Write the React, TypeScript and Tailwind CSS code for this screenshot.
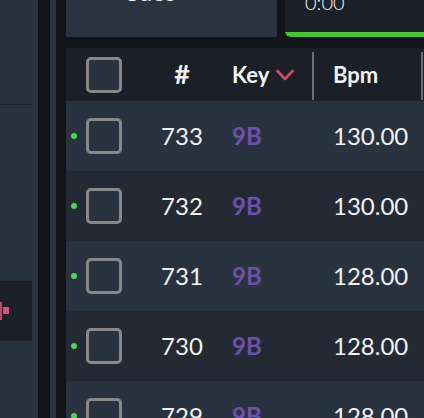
import React from 'react';

// --- DATA: visible tracks ---
const TRACKS = [
  { id: 733, key: '9B', bpm: '130.00' },
  { id: 732, key: '9B', bpm: '130.00' },
  { id: 731, key: '9B', bpm: '128.00' },
  { id: 730, key: '9B', bpm: '128.00' },
  { id: 729, key: '9B', bpm: '128.00' },
];

const Checkbox: React.FC = () => (
  <div className="w-[36px] h-[36px] shrink-0 rounded-[5px] border-[3px] border-[#888888] bg-[#29323f]" />
);

const App: React.FC = () => {
  return (
    <div className="flex h-[418px] w-[424px] overflow-hidden bg-[#111418] font-['Lato','Noto_Sans',sans-serif] text-[#f2f2f2]">
      {/* Left side panel */}
      <aside className="w-[38px] shrink-0 flex flex-col bg-[#283240]">
        <div className="h-[104px] shrink-0" />
        <div className="h-px w-[32px] shrink-0 bg-[#1a1f27]" />
        <div className="h-[176px] shrink-0" />
        <div className="h-[60px] w-[32px] shrink-0 flex items-center bg-[#1b2029]">
          <svg width="10" height="20" viewBox="0 0 10 20">
            <rect x="0" y="1" width="2" height="18" fill="#c4466f" />
            <rect x="3" y="6" width="6" height="7" fill="#dc527d" />
          </svg>
        </div>
      </aside>

      {/* Scroll track */}
      <div className="ml-[12px] w-[6px] shrink-0 bg-[#283240]" />

      <main className="ml-[10px] flex-1 min-w-0 flex flex-col">
        {/* Top cards (scrolled partly off) */}
        <div className="h-[37px] shrink-0 flex gap-[8px]">
          <div className="w-[211px] shrink-0 overflow-hidden bg-[#2a3340]">
            <div className="-mt-[23px] pl-[57px] text-[24px] leading-[29px]">Cues</div>
          </div>
          <div className="flex-1 flex flex-col justify-between overflow-hidden rounded-bl-[6px] bg-[#1b2029]">
            <div className="-mt-[10px] pl-[20px] text-[20px] leading-[24px] font-light">0:00</div>
            <div className="h-[5px] rounded-bl-[6px] bg-[#4cc23b]" />
          </div>
        </div>

        {/* Table header */}
        <div className="mt-[11px] h-[53px] shrink-0 flex items-center bg-[#1b2028]">
          <div className="w-[20px] shrink-0" />
          <Checkbox />
          <div className="ml-[20px] w-[80px] shrink-0 text-center text-[27px] font-bold">#</div>
          <div className="ml-[10px] w-[80px] shrink-0 flex items-center gap-[7px] text-[22px] font-bold">
            Key
            <svg width="18" height="12" viewBox="0 0 18 12" fill="none">
              <path d="M1.5 2 L9 10 L16.5 2" stroke="#d4476f" strokeWidth="2.6" strokeLinecap="round" strokeLinejoin="round" />
            </svg>
          </div>
          <div className="w-[2px] self-stretch mt-[4px] mb-[1px] shrink-0 bg-[#6f6f6f]" />
          <div className="w-[107px] shrink-0 pl-[19px] text-[22px] font-bold">Bpm</div>
          <div className="w-[2px] self-stretch mt-[4px] mb-[1px] shrink-0 bg-[#6f6f6f]" />
        </div>

        {/* Rows */}
        {TRACKS.map((t, i) => (
          <div
            key={t.id}
            className={`h-[70px] shrink-0 flex items-center ${i % 2 === 0 ? 'bg-[#29323f]' : 'bg-[#232a33]'}`}
          >
            <div className="w-[20px] shrink-0 pl-[5px]">
              <div className="w-[6px] h-[6px] rounded-full bg-[#4fd35f]" />
            </div>
            <Checkbox />
            <div className="ml-[20px] w-[80px] shrink-0 text-center text-[24px]">{t.id}</div>
            <div className="ml-[10px] w-[80px] shrink-0 text-[24px] font-bold text-[#6e50ad]">{t.key}</div>
            <div className="w-[2px] shrink-0" />
            <div className="w-[107px] shrink-0 pl-[19px] text-[24px]">{t.bpm}</div>
          </div>
        ))}
      </main>
    </div>
  );
};

export default App;
